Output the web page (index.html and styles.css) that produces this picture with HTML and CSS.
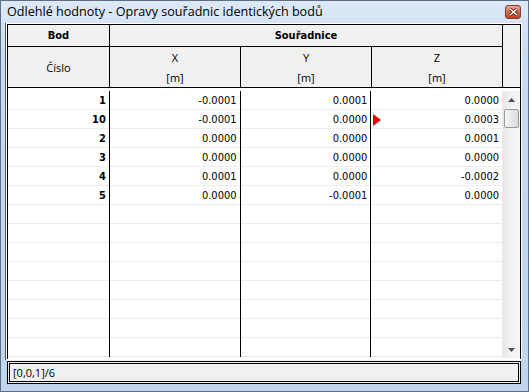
FILE: index.html
```html
<!DOCTYPE html>
<html lang="cs">
<head>
  <meta charset="UTF-8">
  <title>Odlehlé hodnoty</title>
  <link rel="stylesheet" href="styles.css">
</head>
<body>
  <div class="window">
    <div class="titlebar">
      <span class="title">Odlehlé hodnoty - Opravy souřadnic identických bodů</span>
      <span class="close">
        <svg width="9" height="8" viewBox="0 0 9 8"><path d="M1 1 L8 7 M8 1 L1 7" stroke="#5a1a10" stroke-width="3"/><path d="M1 1 L8 7 M8 1 L1 7" stroke="#fff" stroke-width="1.6"/></svg>
      </span>
    </div>
    <div class="client">
      <div class="grid">
        <div class="head">
          <div class="hc bold">Bod</div>
          <div class="hc bold span3">Souřadnice</div>
          <div class="hc spare"></div>
          <div class="hc">Číslo</div>
          <div class="hc two"><span>X</span><span>[m]</span></div>
          <div class="hc two"><span>Y</span><span>[m]</span></div>
          <div class="hc two"><span>Z</span><span>[m]</span></div>
        </div>
        <div class="body">
          <div class="rows" id="rows"></div>
          <div class="scrollbar">
            <div class="sb-btn">
              <svg width="7" height="4" viewBox="0 0 7 4"><path d="M0 4 L3.5 0 L7 4 Z" fill="#4f4f4f"/></svg>
            </div>
            <div class="sb-track"><div class="sb-thumb"></div></div>
            <div class="sb-btn">
              <svg width="7" height="4" viewBox="0 0 7 4"><path d="M0 0 L7 0 L3.5 4 Z" fill="#4f4f4f"/></svg>
            </div>
          </div>
        </div>
      </div>
      <div class="status">[0,0,1]/6</div>
    </div>
  </div>
  <script>
    const data = [
      ['1', '-0.0001', '0.0001', '0.0000'],
      ['10', '-0.0001', '0.0000', '0.0003', true],
      ['2', '0.0000', '0.0000', '0.0001'],
      ['3', '0.0000', '0.0000', '0.0000'],
      ['4', '0.0001', '0.0000', '-0.0002'],
      ['5', '0.0000', '-0.0001', '0.0000']
    ];
    const rows = document.getElementById('rows');
    for (let i = 0; i < 14; i++) {
      const d = data[i] || ['', '', '', ''];
      const row = document.createElement('div');
      row.className = 'row';
      for (let c = 0; c < 4; c++) {
        const cell = document.createElement('div');
        cell.className = c === 0 ? 'cell id' : 'cell';
        cell.textContent = d[c];
        if (c === 3 && d[4]) {
          const mark = document.createElement('span');
          mark.className = 'mark';
          cell.appendChild(mark);
        }
        row.appendChild(cell);
      }
      rows.appendChild(row);
    }
  </script>
</body>
</html>
```

FILE: styles.css
```css
body {
  margin: 0;
  padding: 0;
  background: #fff;
}
.window {
  width: 529px;
  height: 392px;
  box-sizing: border-box;
  border: 1px solid #5d6f86;
  background: linear-gradient(#dde9f7, #c8daef 60px, #c0d4eb);
  display: flex;
  flex-direction: column;
}
.titlebar {
  height: 23px;
  flex: none;
  display: flex;
  align-items: center;
  justify-content: space-between;
  padding: 0 7px 0 6px;
}
.title {
  font-family: 'Open Sans', 'Noto Sans', sans-serif;
  font-size: 12.6px;
  color: #000;
  margin-top: -2px;
}
.close {
  width: 16px;
  height: 14px;
  box-sizing: border-box;
  border: 1px solid #8a3b2c;
  border-radius: 3px;
  background: linear-gradient(#e7a696, #cf6a52 50%, #b9412a);
  display: flex;
  align-items: center;
  justify-content: center;
  margin-top: -2px;
}
.client {
  flex: 1;
  margin: 0 7px 7px 6px;
  display: flex;
  flex-direction: column;
  background: #f0f0f0;
}
.grid {
  flex: 1;
  display: flex;
  flex-direction: column;
  border: 1px solid #000;
  border-bottom: none;
  box-shadow: 0 0 0 1px #fff, -1px 0 0 1px #555;
  background: #f0f0f0;
  font-family: 'DejaVu Sans Condensed', 'DejaVu Sans', sans-serif;
  font-size: 11px;
  color: #000;
}
.head {
  display: grid;
  grid-template-columns: 102px 131px 131px 131px 17px;
  grid-template-rows: 22px 41px;
  flex: none;
}
.hc {
  box-sizing: border-box;
  border-right: 1px solid #000;
  border-bottom: 1px solid #000;
  display: flex;
  align-items: center;
  justify-content: center;
  font-family: 'Open Sans', 'Noto Sans', sans-serif;
  font-size: 11px;
}
.hc.bold {
  font-family: 'DejaVu Sans Condensed', 'DejaVu Sans', sans-serif;
  font-weight: bold;
}
.span3 {
  grid-column: span 3;
}
.spare {
  grid-row: span 2;
  border-right: none;
}
.two {
  flex-direction: column;
  line-height: 20px;
  padding-top: 1px;
}
.body {
  flex: 1;
  display: flex;
  background: #fff;
  padding-top: 3px;
  min-height: 0;
}
.rows {
  width: 495px;
  overflow: hidden;
}
.row {
  display: flex;
  height: 19px;
  box-sizing: border-box;
  border-bottom: 1px solid #ececec;
}
.cell {
  position: relative;
  box-sizing: border-box;
  width: 131px;
  height: 19px;
  margin-bottom: -1px;
  border-right: 1px solid #000;
  text-align: right;
  padding-right: 3px;
  line-height: 19px;
}
.cell.id {
  width: 102px;
  font-weight: bold;
}
.row .cell:last-child {
  border-right: none;
}
.mark {
  position: absolute;
  left: 2px;
  top: 4px;
  width: 0;
  height: 0;
  border-top: 6px solid transparent;
  border-bottom: 6px solid transparent;
  border-left: 8px solid #e50000;
}
.scrollbar {
  width: 17px;
  display: flex;
  flex-direction: column;
  background: linear-gradient(to right, #e7e7e7, #f2f2f2 40%, #f5f5f5);
  border-left: 1px solid #ebebeb;
  margin-bottom: 1px;
}
.sb-btn {
  height: 17px;
  display: flex;
  align-items: center;
  justify-content: center;
}
.sb-track {
  flex: 1;
}
.sb-thumb {
  height: 19px;
  margin: 1px 0 0 1px;
  width: 15px;
  box-sizing: border-box;
  border: 1px solid #9a9a9a;
  border-radius: 2px;
  background: linear-gradient(to right, #f6f6f6, #e8e8e8 50%, #dcdcdc);
}
.status {
  flex: none;
  height: 23px;
  margin-top: 2px;
  box-sizing: border-box;
  border: 3px double #000;
  padding-left: 3px;
  display: flex;
  align-items: center;
  font-family: 'Open Sans', 'Noto Sans', sans-serif;
  font-size: 11px;
  background: #f0f0f0;
}
```
